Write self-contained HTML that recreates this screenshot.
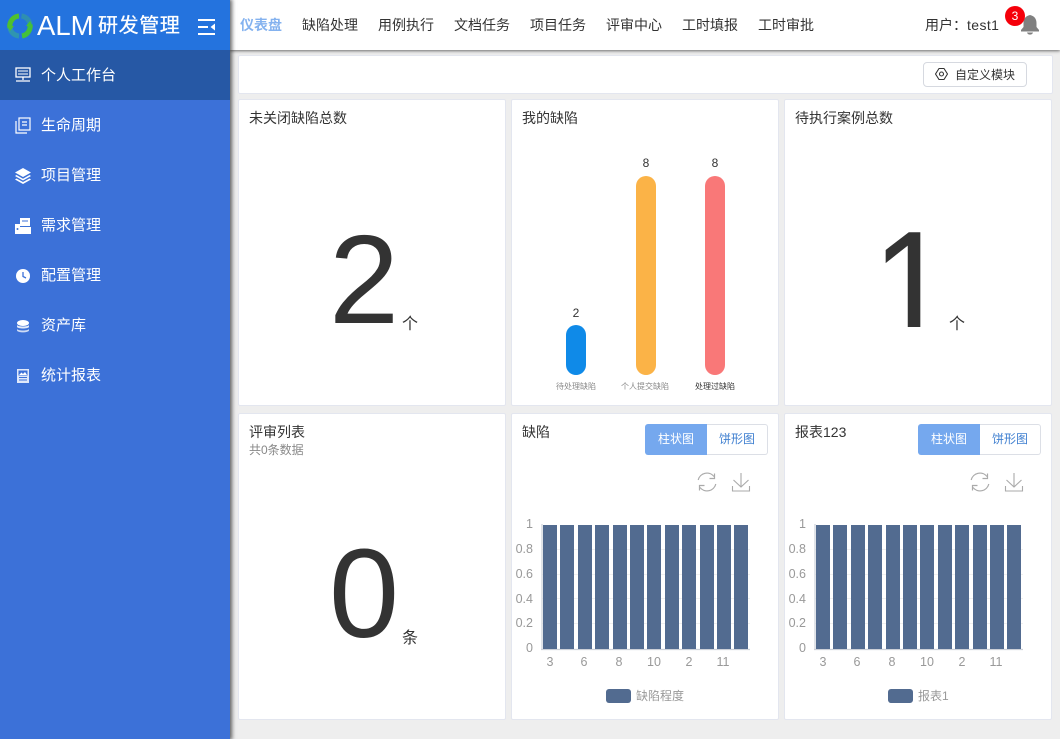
<!DOCTYPE html>
<html lang="zh"><head><meta charset="utf-8"><title>ALM</title>
<style>
*{box-sizing:border-box}
html,body{margin:0;padding:0}
body{width:1060px;height:739px;position:relative;overflow:hidden;background:#eeeeee;font-family:"Liberation Sans","Noto Sans CJK SC",sans-serif;color:#333;font-size:14px}
.a{position:absolute;white-space:nowrap}
#side{left:0;top:0;width:230px;height:739px;background:#3c71d8;box-shadow:1px 0 4px 1px rgba(0,0,0,.6);z-index:1}
#logo{left:0;top:0;width:230px;height:50px;background:#2473de;z-index:1}
#act{left:0;top:50px;width:230px;height:50px;background:#2658a5;z-index:1}
.z{z-index:2}
.m{left:41px;color:#fff;font-size:15px;line-height:20px;z-index:2}
#top{left:230px;top:0;width:830px;height:50px;background:#fff;box-shadow:0 1px 3px rgba(0,0,0,.55)}
.n{top:15px;font-size:14px;line-height:20px;color:#333}
.card{position:absolute;background:#fff;border:1px solid #e3e6ef;border-radius:2px}
.t{font-size:14px;line-height:18px;color:#333}
.big{font-size:126px;line-height:126px;color:#333;font-family:"Liberation Sans",sans-serif}
.one{font-size:158px;line-height:158px;color:#333;font-family:"Liberation Sans",sans-serif;transform:scaleX(.9);transform-origin:0 0;clip-path:inset(0 0 39px 0)}
.u{font-size:16px;line-height:20px;color:#333}
.btn{height:31px;line-height:31px;text-align:center;font-size:12px}
.on{background:#75a8ee;color:#fff;border-radius:3px 0 0 3px;width:62px}
.off{background:#fff;color:#3f7fd0;border:1px solid #dcdfe6;border-left:0;border-radius:0 3px 3px 0;width:61px;line-height:29px}
</style></head><body>
<div class="a" id="top"></div>
<div class="a" id="side"></div>
<div class="a" id="logo"></div>
<div class="a" id="act"></div>

<svg class="a z" style="left:7px;top:13px" width="26" height="26" viewBox="0 0 26 26" fill="none" stroke-width="5">
<path d="M3 15A10 10 0 0 1 12 3" stroke="#4fc02e"/>
<path d="M14.500 3A10 10 0 0 1 23 11" stroke="#2f8fb0"/>
<path d="M23 11.500A10 10 0 0 1 15 23" stroke="#44c03a"/>
<path d="M12 23A10 10 0 0 1 3 15" stroke="#2f95b0"/>
<path d="M0 12L7 13 3 18Z" fill="#4fc02e"/><path d="M26 14L19 13 23 8Z" fill="#44c03a"/>
</svg>
<div class="a z" style="left:37px;top:11px;color:#fff;font-size:27.500px;line-height:30px;font-family:'Liberation Sans',sans-serif">ALM</div>
<div class="a z" style="left:98px;top:12px;color:#fff;font-size:20px;line-height:28px;letter-spacing:.6px;-webkit-text-stroke:.25px #fff">研发管理</div>
<svg class="a z" style="left:198px;top:19px" width="18" height="17" viewBox="0 0 18 17" fill="#fff">
<rect x="0" y="0" width="17" height="2"/><rect x="0" y="7" width="10" height="2"/><rect x="0" y="14" width="17" height="2"/><path d="M17 4.500V11.500L12.500 8Z"/>
</svg>

<svg class="a z" style="left:15px;top:67px" width="16" height="15" viewBox="0 0 16 15" fill="none" stroke="#fff" stroke-width="1.3"><rect x="1" y="1" width="14" height="9"/><path d="M3 4H13M3 7H13" stroke-width="1"/><path d="M8 10V13M1 14H15"/></svg>
<div class="a m" style="top:66px">个人工作台</div>

<svg class="a z" style="left:15px;top:117px" width="16" height="17" viewBox="0 0 16 17" fill="none" stroke="#fff" stroke-width="1.2"><rect x="4" y="1" width="11" height="12"/><path d="M1 4V16H12M7 5H12M7 8H12"/></svg>
<div class="a m" style="top:116px">生命周期</div>

<svg class="a z" style="left:15px;top:167px" width="16" height="17" viewBox="0 0 16 17" fill="#fff"><path d="M8 1L16 5.500 8 10 0 5.500Z"/><path d="M1.500 8L8 11.700 14.500 8 16 9 8 13.500 0 9Z"/><path d="M1.500 11.500L8 15 14.500 11.500 16 12.500 8 17 0 12.500Z"/></svg>
<div class="a m" style="top:166px">项目管理</div>

<svg class="a z" style="left:15px;top:218px" width="16" height="16" viewBox="0 0 16 16" fill="#fff"><path d="M5 0H15V8H5Z"/><path d="M0 6H5V9H16V16H0Z"/><rect x="7" y="2.500" width="6" height="1" fill="#3c71d8"/><circle cx="2.500" cy="11" r="1" fill="#3c71d8"/></svg>
<div class="a m" style="top:216px">需求管理</div>

<svg class="a z" style="left:16px;top:269px" width="14" height="14" viewBox="0 0 14 14"><circle cx="7" cy="7" r="7" fill="#fff"/><path d="M7 3V7.500L10 9" stroke="#3c71d8" stroke-width="1.300" fill="none"/></svg>
<div class="a m" style="top:266px">配置管理</div>

<svg class="a z" style="left:17px;top:320px" width="12" height="13" viewBox="0 0 12 13" fill="#fff"><ellipse cx="6" cy="3" rx="6" ry="3"/><path d="M0 5C1 7 11 7 12 5V7C11 9 1 9 0 7Z" opacity=".85"/><path d="M0 9C1 11 11 11 12 9V10.500C11 13 1 13 0 10.500Z" opacity=".75"/></svg>
<div class="a m" style="top:316px">资产库</div>

<svg class="a z" style="left:17px;top:369px" width="12" height="14" viewBox="0 0 12 14"><rect width="12" height="14" fill="#dfe8fa"/><rect x="1.500" y="1.500" width="9" height="5" fill="#3c71d8"/><path d="M2 6L4.500 3.500 6 5 8 3 10 6Z" fill="#fff"/><path d="M2 8.500H10M2 11H10" stroke="#3c71d8"/></svg>
<div class="a m" style="top:366px">统计报表</div>

<div class="a n" style="left:240px;color:#84b2ef;font-weight:700">仪表盘</div>
<div class="a n" style="left:302px">缺陷处理</div>
<div class="a n" style="left:378px">用例执行</div>
<div class="a n" style="left:454px">文档任务</div>
<div class="a n" style="left:530px">项目任务</div>
<div class="a n" style="left:606px">评审中心</div>
<div class="a n" style="left:682px">工时填报</div>
<div class="a n" style="left:758px">工时审批</div>
<div class="a n" style="left:925px">用户：<span style="letter-spacing:.4px">test1</span></div>
<svg class="a" style="left:1020px;top:14px" width="20" height="21" viewBox="0 0 20 21" fill="#808080"><path d="M10 1C5.500 2 3.500 5 3.500 9V13L1 16V17.500H19V16L16.500 13V9C16.500 5 14.500 2 10 1Z"/><path d="M7 18.500H13C12.500 21.300 7.500 21.300 7 18.500Z"/></svg>
<div class="a" style="left:1005px;top:6px;width:20px;height:20px;border-radius:50%;background:#f5000a;color:#fff;font-size:12px;line-height:20px;text-align:center">3</div>

<div class="card" style="left:238px;top:55px;width:815px;height:39px"></div>
<div class="a" style="left:923px;top:62px;width:104px;height:25px;background:#fff;border:1px solid #d6d9e0;border-radius:4px"></div>
<svg class="a" style="left:935px;top:67px" width="13" height="14" viewBox="0 0 13 14" fill="none" stroke="#333" stroke-width="1.100"><path d="M4 1.500H9L12.500 7 9 12.500H4L.5 7Z" stroke-linejoin="round"/><circle cx="6.500" cy="7" r="2"/></svg>
<div class="a" style="left:955px;top:66px;font-size:12px;line-height:18px">自定义模块</div>

<div class="card" style="left:238px;top:99px;width:268px;height:307px"></div>
<div class="card" style="left:511px;top:99px;width:268px;height:307px"></div>
<div class="card" style="left:784px;top:99px;width:268px;height:307px"></div>
<div class="card" style="left:238px;top:413px;width:268px;height:307px"></div>
<div class="card" style="left:511px;top:413px;width:268px;height:307px"></div>
<div class="card" style="left:784px;top:413px;width:268px;height:307px"></div>

<div class="a t" style="left:249px;top:109px">未关闭缺陷总数</div>
<div class="a t" style="left:522px;top:109px">我的缺陷</div>
<div class="a t" style="left:795px;top:109px">待执行案例总数</div>
<div class="a t" style="left:249px;top:423px">评审列表</div>
<div class="a" style="left:249px;top:442px;font-size:12px;line-height:16px;color:#888">共0条数据</div>
<div class="a t" style="left:522px;top:423px">缺陷</div>
<div class="a t" style="left:795px;top:423px">报表123</div>

<div class="a big" style="left:329px;top:217px">2</div>
<div class="a u" style="left:402px;top:315px">个</div>
<div class="a one" style="left:872px;top:208px">1</div>
<div class="a u" style="left:949px;top:315px">个</div>
<div class="a big" style="left:329px;top:531px">0</div>
<div class="a u" style="left:402px;top:629px">条</div>

<div class="a" style="left:566px;top:325px;width:20px;height:50px;border-radius:10px;background:#0f8ae8"></div>
<div class="a" style="left:636px;top:176px;width:20px;height:199px;border-radius:10px;background:#fbb347"></div>
<div class="a" style="left:705px;top:176px;width:20px;height:199px;border-radius:10px;background:#f97878"></div>
<div class="a" style="left:566px;top:305px;width:20px;text-align:center;font-size:12px;line-height:16px">2</div>
<div class="a" style="left:636px;top:155px;width:20px;text-align:center;font-size:12px;line-height:16px">8</div>
<div class="a" style="left:705px;top:155px;width:20px;text-align:center;font-size:12px;line-height:16px">8</div>
<div class="a" style="left:556px;top:381px;font-size:8px;line-height:12px;color:#888">待处理缺陷</div>
<div class="a" style="left:621px;top:381px;font-size:8px;line-height:12px;color:#888">个人提交缺陷</div>
<div class="a" style="left:695px;top:381px;font-size:8px;line-height:12px;color:#333">处理过缺陷</div>

<div class="a btn on" style="left:645px;top:424px">柱状图</div>
<div class="a btn off" style="left:707px;top:424px">饼形图</div>
<div class="a btn on" style="left:918px;top:424px">柱状图</div>
<div class="a btn off" style="left:980px;top:424px">饼形图</div>

<svg class="a" style="left:697px;top:472px" width="20" height="20" viewBox="0 0 20 20" fill="none" stroke="#aaa" stroke-width="1.200"><path d="M1.200 8A9 9 0 0 1 17 4.500"/><path d="M17.500 1.500V6.500H12.500"/><path d="M18.800 12A9 9 0 0 1 3 15.500"/><path d="M2.500 18.500V13.500H7.500"/></svg>
<svg class="a" style="left:970px;top:472px" width="20" height="20" viewBox="0 0 20 20" fill="none" stroke="#aaa" stroke-width="1.200"><path d="M1.200 8A9 9 0 0 1 17 4.500"/><path d="M17.500 1.500V6.500H12.500"/><path d="M18.800 12A9 9 0 0 1 3 15.500"/><path d="M2.500 18.500V13.500H7.500"/></svg>
<svg class="a" style="left:731px;top:472px" width="20" height="20" viewBox="0 0 20 20" fill="none" stroke="#aaa" stroke-width="1.100"><path d="M10 1V15M2.500 8L10 15 17.500 8M1.500 14V19H18.500V14"/></svg>
<svg class="a" style="left:1004px;top:472px" width="20" height="20" viewBox="0 0 20 20" fill="none" stroke="#aaa" stroke-width="1.100"><path d="M10 1V15M2.500 8L10 15 17.500 8M1.500 14V19H18.500V14"/></svg>

<svg class="a" style="left:511px;top:510px" width="268" height="205" viewBox="0 0 268 205" font-family="Liberation Sans, sans-serif" font-size="12.500" fill="#999">
<path d="M31 39.500H239M31 64.500H239M31 88.500H239M31 113.500H239" stroke="#f0f0f0"/>
<path d="M31 14V140M30 139.500H239" stroke="#ccd0d8" stroke-width="1.200"/>
<g fill="#526b90">
<rect x="32" y="15" width="14" height="124"/><rect x="49" y="15" width="14" height="124"/><rect x="67" y="15" width="14" height="124"/><rect x="84" y="15" width="14" height="124"/><rect x="102" y="15" width="14" height="124"/><rect x="119" y="15" width="14" height="124"/><rect x="136" y="15" width="14" height="124"/><rect x="154" y="15" width="14" height="124"/><rect x="171" y="15" width="14" height="124"/><rect x="189" y="15" width="14" height="124"/><rect x="206" y="15" width="14" height="124"/><rect x="223" y="15" width="14" height="124"/>
</g>
<g text-anchor="end"><text x="22" y="18">1</text><text x="22" y="43">0.8</text><text x="22" y="68">0.6</text><text x="22" y="93">0.4</text><text x="22" y="117">0.2</text><text x="22" y="142">0</text></g>
<g text-anchor="middle"><text x="39" y="156">3</text><text x="73" y="156">6</text><text x="108" y="156">8</text><text x="143" y="156">10</text><text x="178" y="156">2</text><text x="212" y="156">11</text></g>
<rect x="95" y="179" width="25" height="14" rx="3" fill="#526b90"/>
<text x="125" y="190" font-family="Liberation Sans, Noto Sans CJK SC, sans-serif" font-size="12">缺陷程度</text>
</svg>

<svg class="a" style="left:784px;top:510px" width="268" height="205" viewBox="0 0 268 205" font-family="Liberation Sans, sans-serif" font-size="12.500" fill="#999">
<path d="M31 39.500H239M31 64.500H239M31 88.500H239M31 113.500H239" stroke="#f0f0f0"/>
<path d="M31 14V140M30 139.500H239" stroke="#ccd0d8" stroke-width="1.200"/>
<g fill="#526b90">
<rect x="32" y="15" width="14" height="124"/><rect x="49" y="15" width="14" height="124"/><rect x="67" y="15" width="14" height="124"/><rect x="84" y="15" width="14" height="124"/><rect x="102" y="15" width="14" height="124"/><rect x="119" y="15" width="14" height="124"/><rect x="136" y="15" width="14" height="124"/><rect x="154" y="15" width="14" height="124"/><rect x="171" y="15" width="14" height="124"/><rect x="189" y="15" width="14" height="124"/><rect x="206" y="15" width="14" height="124"/><rect x="223" y="15" width="14" height="124"/>
</g>
<g text-anchor="end"><text x="22" y="18">1</text><text x="22" y="43">0.8</text><text x="22" y="68">0.6</text><text x="22" y="93">0.4</text><text x="22" y="117">0.2</text><text x="22" y="142">0</text></g>
<g text-anchor="middle"><text x="39" y="156">3</text><text x="73" y="156">6</text><text x="108" y="156">8</text><text x="143" y="156">10</text><text x="178" y="156">2</text><text x="212" y="156">11</text></g>
<rect x="104" y="179" width="25" height="14" rx="3" fill="#526b90"/>
<text x="134" y="190" font-family="Liberation Sans, Noto Sans CJK SC, sans-serif" font-size="12">报表1</text>
</svg>
</body></html>
